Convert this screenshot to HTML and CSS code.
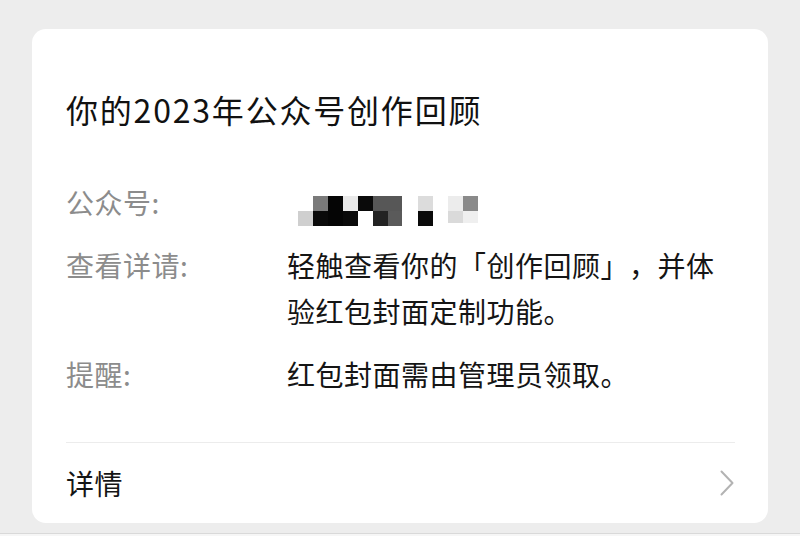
FILE: index.html
```html
<!DOCTYPE html>
<html lang="zh">
<head>
<meta charset="utf-8">
<link rel="stylesheet" href="styles.css">
</head>
<body>
<div class="card">
  <h1 class="title">你的2023年公众号创作回顾</h1>
  <div class="info">
    <div class="row">
      <div class="label">公众号:</div>
      <div class="value value-name">
        <svg class="mosaic" width="180" height="30" viewBox="0 0 180 30">
          <rect x="0" y="15" width="15" height="15" fill="#cfcfcf"/>
          <rect x="15" y="0" width="15" height="15" fill="#7a7a7a"/>
          <rect x="15" y="15" width="15" height="15" fill="#0a0a0a"/>
          <rect x="30" y="0" width="15" height="30" fill="#050505"/>
          <rect x="45" y="0" width="15" height="15" fill="#e9e9e9"/>
          <rect x="45" y="15" width="15" height="15" fill="#0a0a0a"/>
          <rect x="60" y="0" width="15" height="15" fill="#0a0a0a"/>
          <rect x="75" y="0" width="29" height="15" fill="#575757"/>
          <rect x="75" y="15" width="15" height="15" fill="#222"/>
          <rect x="90" y="15" width="14" height="15" fill="#5a5a5a"/>
          <rect x="120" y="0" width="15" height="15" fill="#dcdcdc"/>
          <rect x="120" y="15" width="15" height="15" fill="#0a0a0a"/>
          <rect x="150" y="0" width="15" height="15" fill="#ececec"/>
          <rect x="150" y="15" width="15" height="12" fill="#dadada"/>
          <rect x="165" y="0" width="15" height="15" fill="#8a8a8a"/>
          <rect x="165" y="15" width="15" height="12" fill="#efefef"/>
        </svg>
      </div>
    </div>
    <div class="row">
      <div class="label">查看详请:</div>
      <div class="value">轻触查看你的「创作回顾」，并体验红包封面定制功能。</div>
    </div>
    <div class="row">
      <div class="label">提醒:</div>
      <div class="value">红包封面需由管理员领取。</div>
    </div>
  </div>
  <div class="footer">
    <span class="footer-text">详情</span>
    <svg class="chevron" width="14" height="26" viewBox="0 0 14 26">
      <polyline points="1.5,1.5 12.5,13 1.5,24.5" fill="none" stroke="#b3b3b3" stroke-width="2" stroke-linecap="round" stroke-linejoin="round"/>
    </svg>
  </div>
</div>
<div class="bottom-strip"></div>
</body>
</html>
```
FILE: styles.css
```css
html, body {
  margin: 0;
  padding: 0;
}
body {
  background: #ededed;
  width: 800px;
  height: 536px;
  overflow: hidden;
  font-family: "Noto Sans CJK SC", "Noto Sans", sans-serif;
  padding-top: 29px;
  box-sizing: border-box;
  text-spacing-trim: space-all;
}
.card {
  margin: 0 32px;
  height: 494px;
  background: #fff;
  border-radius: 14px;
  padding: 0 33px 0 34px;
  box-sizing: border-box;
  display: flex;
  flex-direction: column;
}
.title {
  margin: 58px 0 0;
  font-size: 32px;
  font-weight: 400;
  line-height: 44px;
  color: #111;
  letter-spacing: 1.8px;
}
.info {
  margin-top: 48px;
  display: flex;
  flex-direction: column;
  gap: 17px;
}
.row {
  display: flex;
  font-size: 28px;
  line-height: 46px;
}
.label {
  width: 221px;
  flex: none;
  color: #8c8c8c;
  letter-spacing: 0.5px;
}
.value {
  flex: 1;
  color: #151515;
  letter-spacing: 0.5px;
}
.value-name {
  height: 46px;
  padding-top: 17px;
  padding-left: 11px;
  box-sizing: border-box;
}
.mosaic {
  display: block;
}
.footer {
  margin-top: 45px;
  border-top: 1px solid #ececec;
  flex: 1;
  display: flex;
  align-items: center;
  justify-content: space-between;
  padding-bottom: 1px;
}
.footer-text {
  font-size: 28px;
  color: #151515;
  letter-spacing: 0.5px;
}
.chevron {
  display: block;
  margin-right: 1px;
}
.bottom-strip {
  margin-top: 10px;
  height: 3px;
  border-top: 1px solid #d9d9d9;
  background: #f6f6f6;
}
```
